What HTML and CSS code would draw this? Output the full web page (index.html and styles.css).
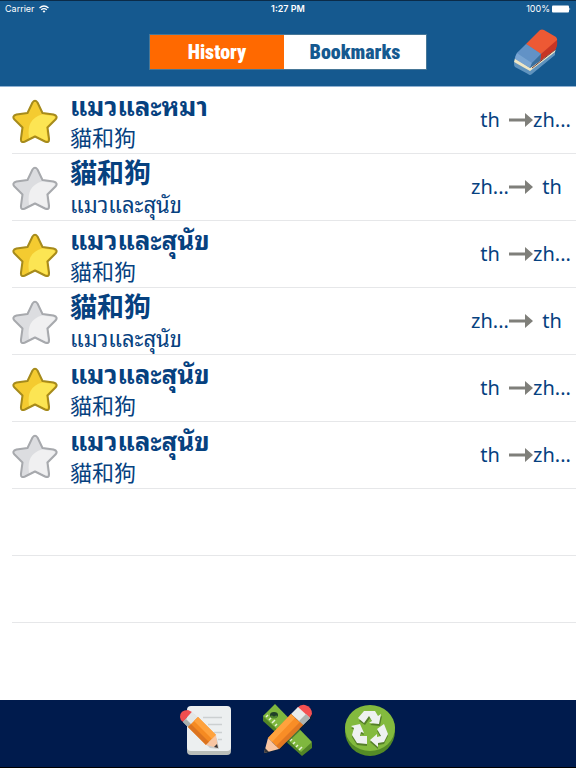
FILE: index.html
```html
<!DOCTYPE html>
<html lang="en">
<head>
    <meta charset="UTF-8">
    <meta name="viewport" content="width=device-width, initial-scale=1.0">
    <title>History</title>
    <link rel="stylesheet" href="styles.css">
</head>
<body>
    <!-- Shared icons -->
    <svg class="defs" width="0" height="0">
        <defs>
            <g id="star">
                <path class="star-body" d="M20.500 3.500Q23 0 25.500 3.500L30.500 14L41.500 15.500Q46.500 17 43.500 20.500L35.500 28.500L37 39.500Q37.500 44.500 33 42.500L23 37.500L13 42.500Q8.500 44.500 9 39.500L10.500 28.500L2.500 20.500Q-0.500 17 4.500 15.500L15.500 14Z"/>
                <path class="star-light" d="M30 15.500L41.500 17Q44 18 42 20L34 28L35.500 40Q35.500 42 33 41L23 36L17 39Q14 20 30 15.500Z"/>
            </g>
            <path id="arrow" d="M0 6.500h16V1l8 7-8 7V9.500H0z" fill="#7f7f7a"/>
        </defs>
    </svg>

    <header class="header">
        <div class="status-bar">
            <span class="carrier">Carrier
                <svg width="10" height="8" viewBox="0 0 10 8"><g fill="none" stroke="#fff" stroke-width="1.300"><path d="M.5 3Q5-1 9.500 3M2.200 4.800Q5 2.400 7.800 4.800"/></g><path d="M3.600 6.200Q5 5 6.400 6.200L5 7.800z" fill="#fff"/></svg>
            </span>
            <span class="clock">1:27 PM</span>
            <span class="battery">100%
                <svg width="19" height="8" viewBox="0 0 19 8"><rect width="17" height="7" y=".5" rx="1" fill="#fff"/><path d="M17.500 2.500q1.500 1.500 0 3z" fill="#fff"/></svg>
            </span>
        </div>
        <div class="toolbar">
            <div class="tabs">
                <button class="tab active" type="button">History</button>
                <button class="tab" type="button">Bookmarks</button>
            </div>
            <button class="eraser" type="button" aria-label="Clear history">
                <svg width="46" height="48" viewBox="0 0 46 48">
                    <path d="M1 34L17 41L42 23V27L19 46Q17 48 15 46L2 39Q1 38 1 36z" fill="#5f93be"/>
                    <path d="M2 30L17 39L43 20L42 24L17 43L1 34z" fill="#efe7c5"/>
                    <path d="M19 40L43 21" stroke="#6b3b38" stroke-width="1"/>
                    <path d="M4 25L14 16L28 25L44 13L42 22L17 40L2 30z" fill="#5588bd"/>
                    <path d="M27 2Q29 1 31 2L43 9Q45 11 44 14L28 26L13 16z" fill="#ed5934"/>
                    <path d="M44 12Q45 18 42 22L27 33L28 26z" fill="#c73524"/>
                    <path d="M13 16L28 26L19 35L4 25z" fill="#6292c6"/>
                    <path d="M4 25L19 35L17 40L2 31Q2 28 4 25z" fill="#78a4d2"/>
                    <path d="M19 35L28 26L27 33L17 40z" fill="#396e9c"/>
                </svg>
            </button>
        </div>
    </header>

    <main class="history">
        <ul class="history-list">
            <li class="entry">
                <button class="star on" type="button" aria-label="Bookmark"><svg width="46" height="46" viewBox="0 0 46 46"><use href="#star"/></svg></button>
                <div class="words">
                    <strong lang="th">แมวและหมา</strong>
                    <span lang="zh-Hant">貓和狗</span>
                </div>
                <div class="langs"><span>th</span><svg width="24" height="16"><use href="#arrow"/></svg><span>zh...</span></div>
            </li>
            <li class="entry">
                <button class="star" type="button" aria-label="Bookmark"><svg width="46" height="46" viewBox="0 0 46 46"><use href="#star"/></svg></button>
                <div class="words">
                    <strong lang="zh-Hant">貓和狗</strong>
                    <span lang="th">แมวและสุนัข</span>
                </div>
                <div class="langs"><span>zh...</span><svg width="24" height="16"><use href="#arrow"/></svg><span>th</span></div>
            </li>
            <li class="entry">
                <button class="star on" type="button" aria-label="Bookmark"><svg width="46" height="46" viewBox="0 0 46 46"><use href="#star"/></svg></button>
                <div class="words">
                    <strong lang="th">แมวและสุนัข</strong>
                    <span lang="zh-Hant">貓和狗</span>
                </div>
                <div class="langs"><span>th</span><svg width="24" height="16"><use href="#arrow"/></svg><span>zh...</span></div>
            </li>
            <li class="entry">
                <button class="star" type="button" aria-label="Bookmark"><svg width="46" height="46" viewBox="0 0 46 46"><use href="#star"/></svg></button>
                <div class="words">
                    <strong lang="zh-Hant">貓和狗</strong>
                    <span lang="th">แมวและสุนัข</span>
                </div>
                <div class="langs"><span>zh...</span><svg width="24" height="16"><use href="#arrow"/></svg><span>th</span></div>
            </li>
            <li class="entry">
                <button class="star on" type="button" aria-label="Bookmark"><svg width="46" height="46" viewBox="0 0 46 46"><use href="#star"/></svg></button>
                <div class="words">
                    <strong lang="th">แมวและสุนัข</strong>
                    <span lang="zh-Hant">貓和狗</span>
                </div>
                <div class="langs"><span>th</span><svg width="24" height="16"><use href="#arrow"/></svg><span>zh...</span></div>
            </li>
            <li class="entry">
                <button class="star" type="button" aria-label="Bookmark"><svg width="46" height="46" viewBox="0 0 46 46"><use href="#star"/></svg></button>
                <div class="words">
                    <strong lang="th">แมวและสุนัข</strong>
                    <span lang="zh-Hant">貓和狗</span>
                </div>
                <div class="langs"><span>th</span><svg width="24" height="16"><use href="#arrow"/></svg><span>zh...</span></div>
            </li>
            <li class="entry"></li>
            <li class="entry"></li>
        </ul>
    </main>

    <footer class="footer">
        <button type="button" aria-label="Notes">
            <svg width="54" height="54" viewBox="0 0 54 54">
                <rect x="8" y="7" width="44" height="45" rx="4" fill="#b9bdb9"/>
                <rect x="8" y="3" width="44" height="45" rx="4" fill="#eceff0"/>
                <path d="M24 14.500H43M29 21.500H43M35 29.500H43M39 36.500H43" stroke="#ccd0d1" stroke-width="1.500"/>
                <path d="M3 17L9 24L31 45L40 46L38 36L15 11z" fill="#777" opacity=".3"/>
                <path d="M1 14Q1 7 9 7L13 9L4 19Q1 17 1 14z" fill="#f04e50"/>
                <path d="M4 19L13 9L19 14L9 24z" fill="#e3e7e7"/>
                <path d="M4 19L7 16L12 21L9 24z" fill="#aab0ad"/>
                <path d="M9 24L19 14L37 32L27 42z" fill="#f58a22"/>
                <path d="M15 18L19 14L37 32L33 36z" fill="#ffa23d"/>
                <path d="M9 24L12 21L30 39L27 42z" fill="#dc7420"/>
                <path d="M27 42L37 32L39 45z" fill="#f8c5a2"/>
                <path d="M35 44L38 41L39 45z" fill="#34363a"/>
            </svg>
        </button>
        <button type="button" aria-label="Tools">
            <svg width="54" height="54" viewBox="0 0 54 54">
                <path d="M2 13L14 3L51 40V45L41 53L2 18z" fill="#528526"/>
                <path d="M2 13L14 1L51 39L40 49z" fill="#7fb73e"/>
                <ellipse cx="13" cy="12" rx="4" ry="3" fill="#203f28"/>
                <path d="M10 13Q13 16 16 13" fill="none" stroke="#4d842d" stroke-width="2"/>
                <path d="M5 14l2-2M8 17l2-2M11 20l3-3M14 23l2-2M29 38l2-2M32 41l2-2M35 44l2-2M38 47l3-3" stroke="#e6f2d6" stroke-width="1.500"/>
                <path d="M4 51L20 46L52 15V12L41 8z" fill="#10242b" opacity=".45"/>
                <path d="M36 5Q40 1 44 2Q51 4 51 11L48 16z" fill="#f45152"/>
                <path d="M30 11L37 4L49 15L42 22z" fill="#e8eceb"/>
                <path d="M38 18L45 11L49 15L42 22z" fill="#adb3b0"/>
                <path d="M7 35L30 11L42 22L18 46z" fill="#f88d26"/>
                <path d="M7 35L30 11L34 15L11 39z" fill="#ffa23d"/>
                <path d="M15 43L39 19L42 22L18 46z" fill="#df7722"/>
                <path d="M7 35L18 46L3 50z" fill="#f8c5a2"/>
                <path d="M4 45L8 49L3 50z" fill="#34363a"/>
            </svg>
        </button>
        <button type="button" aria-label="Recycle">
            <svg width="54" height="54" viewBox="0 0 54 54">
                <ellipse cx="27" cy="28" rx="25" ry="25" fill="#548b26"/>
                <ellipse cx="27" cy="25" rx="25" ry="23" fill="#83ba3e"/>
                <g fill="#557f29">
                    <path d="M16 18L22 10H31L35 15L39 13L37 23L27 22L30 20L27 15L22 22z"/>
                    <path d="M8 25L17 23L21 32L18 31L17 35H24V43L14 42L9 34L11 27z"/>
                    <path d="M34 28L41 23L45 33L41 41L35 42V46L27 39L34 33V36L38 35z"/>
                </g>
                <g fill="#eef1f0">
                    <path d="M15 15L21 8H32L35 13L38 11L36 21L26 20L29 18L26 13L21 20z"/>
                    <path d="M8 23L17 21L21 30L18 29L17 33H24V41L14 40L9 32L11 25z"/>
                    <path d="M34 26L41 21L45 31L41 39L35 40V44L27 37L34 31V34L38 33z"/>
                </g>
            </svg>
        </button>
    </footer>
</body>
</html>
```
FILE: styles.css
```css
:root {
    --blue: #15598f;
    --navy: #001b4d;
    --orange: #ff6900;
    --text: #06417f;
    --line: #e6e7e9;
}

* {
    box-sizing: border-box;
    margin: 0;
    padding: 0;
}

body {
    display: flex;
    flex-direction: column;
    min-height: 100vh;
    background: white;
    color: var(--text);
    font-family: "Noto Sans", "Noto Sans CJK TC", sans-serif;
}

button {
    border: none;
    background: none;
    cursor: pointer;
}

svg {
    display: block;
}

.defs {
    position: absolute;
}

/* Header */
.header {
    height: 87px;
    background: var(--blue);
    border-top: 1px solid #0b2b48;
    border-bottom: 1px solid #8fb1d2;
}

.status-bar {
    display: grid;
    grid-template-columns: 1fr auto 1fr;
    align-items: center;
    height: 15px;
    padding: 0 5px;
    color: white;
    font: 9px/15px Inter, sans-serif;
}

.carrier,
.battery {
    display: flex;
    align-items: center;
    gap: 4px;
}

.battery {
    justify-content: flex-end;
    gap: 2px;
}

.clock {
    font-weight: 600;
}

.toolbar {
    display: grid;
    grid-template-columns: 1fr auto 1fr;
    align-items: center;
    height: 71px;
    padding: 0 17px;
}

.tabs {
    display: flex;
    grid-column: 2;
    border: 1px solid #477797;
}

.tab {
    width: 142px;
    height: 34px;
    background: white;
    color: var(--blue);
    font: 900 20px/34px "Roboto Condensed", Roboto, sans-serif;
}

.tab.active {
    width: 134px;
    background: var(--orange);
    color: white;
}

.eraser {
    justify-self: end;
}

/* History */
.history {
    flex: 1;
}

.history-list {
    list-style: none;
    padding-left: 12px;
}

.entry {
    display: flex;
    align-items: center;
    height: 67px;
    border-bottom: 1px solid var(--line);
}

.star {
    --light: #f0f0f1;
    margin-top: 4px;
    stroke: #a7a9ad;
    fill: #dcdde0;
}

.star.on {
    --light: #fce553;
    stroke: #a68b1c;
    fill: #f4cb30;
}

.star-body {
    stroke-width: 2;
    stroke-linejoin: round;
}

.star-light {
    stroke: none;
    fill: var(--light);
}

.words {
    flex: 1;
    padding-left: 12px;
}

.words strong,
.words span {
    display: block;
    white-space: nowrap;
}

.words strong {
    font-size: 26px;
    line-height: 34px;
}

.words span {
    font-size: 22px;
    line-height: 28px;
}

.words :lang(th) {
    font-family: "Noto Sans", "Noto Sans Thai Looped", "Noto Looped Thai", "Droid Sans Thai", Loma, Waree, Garuda, sans-serif;
}

.words strong:lang(zh) {
    font-size: 27px;
}

.langs {
    display: grid;
    grid-template-columns: 38px 24px 38px;
    align-items: center;
    padding-right: 5px;
    font-size: 20px;
    line-height: 28px;
    text-align: center;
}

/* Footer */
.footer {
    display: flex;
    justify-content: center;
    align-items: flex-start;
    gap: 28px;
    height: 68px;
    padding-top: 3px;
    background: var(--navy);
    border-bottom: 1px solid black;
}
```
